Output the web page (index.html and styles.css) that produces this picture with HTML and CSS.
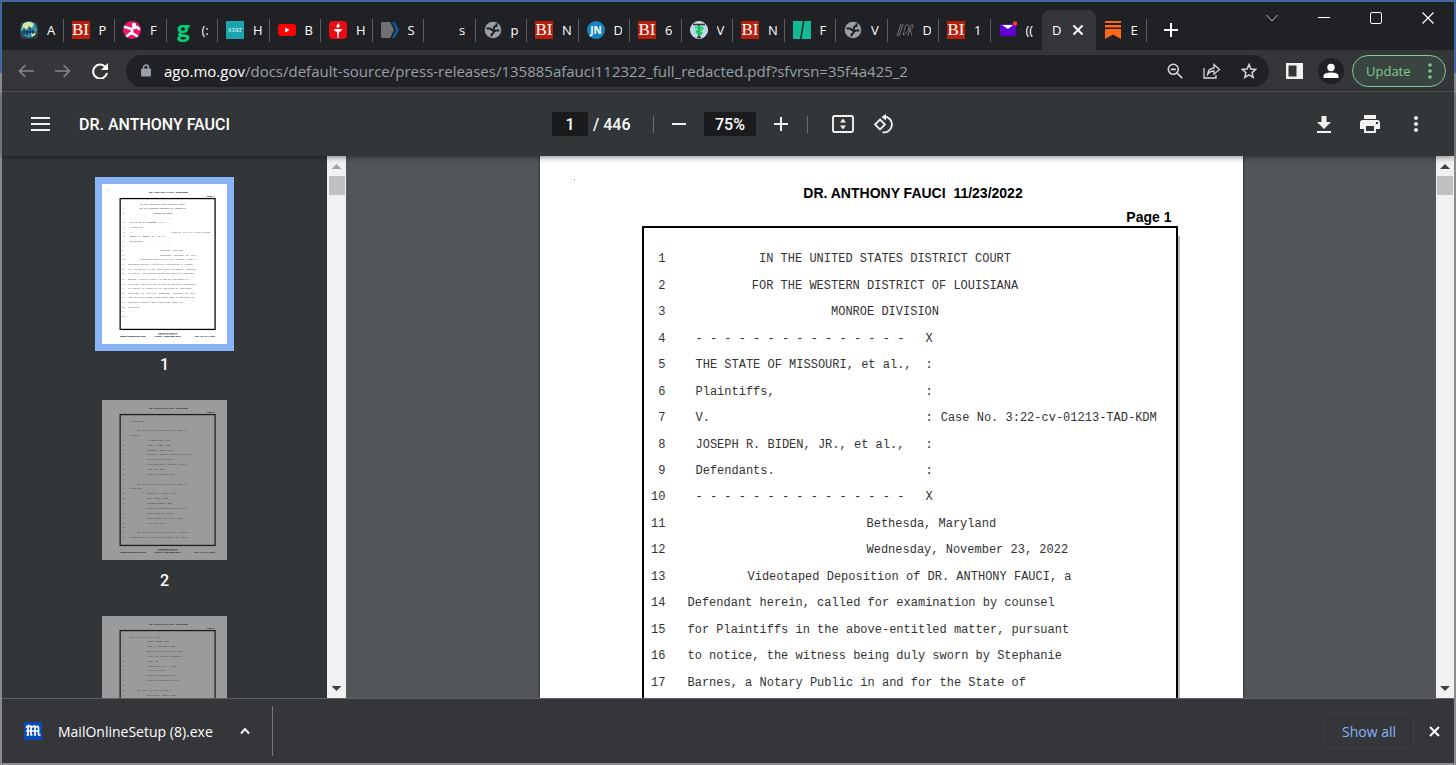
FILE: index.html
```html
<!DOCTYPE html>
<html lang="en">
<head>
    <meta charset="utf-8">
    <meta name="viewport" content="width=device-width, initial-scale=1">
    <title>DR. ANTHONY FAUCI</title>
    <link rel="stylesheet" href="styles.css">
</head>
<body>

    <!-- shared icons -->
    <svg class="sprite" aria-hidden="true">
        <symbol id="globe" viewBox="0 0 18 18">
            <circle cx="9" cy="9" r="8.3" fill="#9aa0a6"/>
            <path d="M2.500 7.500h3.500l2 1.500q2 0 2-2t2.500-2V2.500M15.500 9.500H12l-2.500 1v1.500l-2 1.500v2" fill="none" stroke="#202124" stroke-width="2"/>
        </symbol>
    </svg>

    <header class="tabstrip">
        <nav class="tabs">
            <a class="tab" href="#"><svg class="fav" viewBox="0 0 18 18"><rect y="1" width="18" height="17" rx="3" fill="#33383c"/><circle cx="9" cy="8.500" r="8.300" fill="#2d8fb5"/><path d="M3 3c4-3 9-2 11 0l-2 4-3-2-2 3-5 1zM11 12l5-3-1 5-3 2z" fill="#d8e6a4"/><path d="M4 14V7M7 14V9M10 13V7M13 13V9M2 11h14" stroke="#173c50" stroke-width="1.500"/></svg><span>A</span></a>
            <a class="tab" href="#"><b class="fav bi">BI</b><span>P</span></a>
            <a class="tab" href="#"><svg class="fav" viewBox="0 0 18 18"><circle cx="9" cy="9" r="9" fill="#f0146e"/><circle cx="11" cy="4" r="2.200" fill="#fff"/><path d="M2 6l6 2 6-2M9 8v4l5 3M9 11l-5 4M14 6l2 2" fill="none" stroke="#fff" stroke-width="2.500" stroke-linecap="round"/></svg><span>F</span></a>
            <a class="tab" href="#"><b class="fav gofund">g</b><span>(:</span></a>
            <a class="tab" href="#"><svg class="fav" viewBox="0 0 18 18"><rect width="18" height="18" fill="#1ba5ae"/><text x="9" y="11" text-anchor="middle" font-family="Liberation Serif, serif" font-size="6" fill="#fff">STAT</text></svg><span>H</span></a>
            <a class="tab" href="#"><svg class="fav" viewBox="0 0 18 18"><rect y="3" width="18" height="12" rx="3" fill="#f00"/><path d="M7.200 6.500v5l4.300-2.500z" fill="#fff"/></svg><span>B</span></a>
            <a class="tab" href="#"><svg class="fav" viewBox="0 0 18 18"><rect width="18" height="18" rx="4" fill="#ed0b12"/><path d="M9.500 2c1.500 1.500 1.500 3 .5 4.500H7.700C7 5 8 3.500 9.500 2zM5 8h8c0 1.600-1 2.500-3 2.700L9.600 17H8.400L8 10.700C6 10.500 5 9.600 5 8z" fill="#fff"/></svg><span>H</span></a>
            <a class="tab" href="#"><svg class="fav" viewBox="0 0 18 18"><path d="M1 1h8l4 8-4 8H1q-1 0-1-1V2q0-1 1-1z" fill="#6f7072"/><path d="M11 1h2.500l4.500 8-4.500 8H11l4-8z" fill="#0e5ba6"/></svg><span>S</span></a>
            <a class="tab" href="#"><i class="fav"></i><span>s</span></a>
            <a class="tab" href="#"><svg class="fav"><use href="#globe"/></svg><span>p</span></a>
            <a class="tab" href="#"><b class="fav bi">BI</b><span>N</span></a>
            <a class="tab" href="#"><svg class="fav" viewBox="0 0 18 18"><circle cx="9" cy="9" r="9" fill="#1684c4"/><text x="9" y="12.500" text-anchor="middle" font-family="Open Sans, sans-serif" font-weight="700" font-size="10" fill="#fff">JN</text></svg><span>D</span></a>
            <a class="tab" href="#"><b class="fav bi">BI</b><span>6</span></a>
            <a class="tab" href="#"><svg class="fav" viewBox="0 0 18 18"><circle cx="9" cy="9" r="8.500" fill="#b4d9f2" stroke="#e6e6e0"/><path d="M3 3.500h12M9 3v14M7 16.500h4" stroke="#333" stroke-width="1.500"/><path d="M5 6.500h7.500q1 2-3 2.500t-3 2.500h5q1 1-2.500 2.500" fill="none" stroke="#16d653" stroke-width="1.800"/></svg><span>V</span></a>
            <a class="tab" href="#"><b class="fav bi">BI</b><span>N</span></a>
            <a class="tab" href="#"><svg class="fav" viewBox="0 0 18 18"><path d="M0 0h10L7 18H0zM11.500 0H18v18H8.500z" fill="#13b995"/></svg><span>F</span></a>
            <a class="tab" href="#"><svg class="fav"><use href="#globe"/></svg><span>V</span></a>
            <a class="tab" href="#"><svg class="fav" viewBox="0 0 18 18"><path d="M1 15L5 3M3 15L7 3M7 14l3-10h2q2 1 0 5t-5 5M12 15l3-11h2q1 3-3 5l2 6" fill="#0c0c0d" stroke="#77797b"/></svg><span>D</span></a>
            <a class="tab" href="#"><b class="fav bi">BI</b><span>1</span></a>
            <a class="tab last" href="#"><svg class="fav" viewBox="0 0 18 18"><rect x="1" y="3" width="16" height="12" rx="1" fill="#5f01d1"/><path d="M3 4h11l-5 4z" fill="#fff"/><circle cx="16" cy="2.500" r="2.300" fill="#ff333a"/></svg><span>((</span></a>
            <div class="tab active"><span>D</span><button class="icon-btn tab-close" aria-label="Close tab"><svg width="12" height="12" viewBox="0 0 12 12"><path d="M1.500 1.500l9 9M10.500 1.500l-9 9" stroke="#fff" stroke-width="2"/></svg></button></div>
            <a class="tab" href="#"><svg class="fav" viewBox="0 0 18 18"><path d="M1 0h16v2H1zM1 4h16v2.500H1zM1 8h16v10l-8-4.500L1 18z" fill="#ff6719"/></svg><span>E</span></a>
        </nav>
        <div class="strip-end">
            <button class="icon-btn new-tab" aria-label="New tab"><svg width="14" height="14" viewBox="0 0 14 14"><path d="M7 0v14M0 7h14" stroke="#fff" stroke-width="2"/></svg></button>
            <div class="window-controls">
                <button class="icon-btn" aria-label="Search tabs"><svg width="12" height="12" viewBox="0 0 12 12"><path d="M.5 3L6 9l5.500-6" fill="none" stroke="#bbb"/></svg></button>
                <button class="icon-btn" aria-label="Minimize"><svg width="12" height="12" viewBox="0 0 12 12"><path d="M0 5.500h12" stroke="#fff"/></svg></button>
                <button class="icon-btn" aria-label="Maximize"><svg width="12" height="12" viewBox="0 0 12 12"><rect x=".5" y=".5" width="11" height="11" rx="1.500" fill="none" stroke="#fff"/></svg></button>
                <button class="icon-btn" aria-label="Close"><svg width="12" height="12" viewBox="0 0 12 12"><path d="M.5.5l11 11M11.500.5l-11 11" stroke="#fff" stroke-width="1.200"/></svg></button>
            </div>
        </div>
    </header>

    <div class="toolbar">
        <div class="nav-buttons">
            <button class="icon-btn" aria-label="Back"><svg width="16" height="14" viewBox="0 0 16 14"><path d="M16 7H1.500M7.500 1l-6 6 6 6" fill="none" stroke="#85878a" stroke-width="1.600"/></svg></button>
            <button class="icon-btn" aria-label="Forward"><svg width="16" height="14" viewBox="0 0 16 14"><path d="M0 7h14.500M8.500 1l6 6-6 6" fill="none" stroke="#85878a" stroke-width="1.600"/></svg></button>
            <button class="icon-btn" aria-label="Reload"><svg width="16" height="16" viewBox="0 0 16 16"><path d="M13.500 4A7 7 0 1 0 15 10" fill="none" stroke="#fff" stroke-width="2"/><path d="M16 0v7H9z" fill="#fff"/></svg></button>
        </div>
        <div class="omnibox">
            <svg width="10" height="13" viewBox="0 0 10 13"><path d="M2.500 5V3.500a2.500 2.500 0 0 1 5 0V5" fill="none" stroke="#9aa0a6" stroke-width="1.500"/><rect y="4.500" width="10" height="8" rx="1" fill="#9aa0a6"/></svg>
            <label for="url">ago.mo.gov</label>
            <input id="url" type="text" value="/docs/default-source/press-releases/135885afauci112322_full_redacted.pdf?sfvrsn=35f4a425_2">
            <button class="icon-btn" aria-label="Zoom"><svg width="16" height="16" viewBox="0 0 16 16"><circle cx="6.300" cy="6.300" r="5" fill="none" stroke="#d5d7d9" stroke-width="1.600"/><path d="M10 10l5.200 5.200M3.800 6.300h5" stroke="#d5d7d9" stroke-width="1.700"/></svg></button>
            <button class="icon-btn" aria-label="Share"><svg width="18" height="16" viewBox="0 0 18 16"><path d="M1 5v10h12v-3M4.500 11.500Q5 5.500 11 5V1.500L16.500 6.500 11 11.200V8Q7 8 4.500 11.500z" fill="none" stroke="#d5d7d9" stroke-width="1.300"/></svg></button>
            <button class="icon-btn" aria-label="Bookmark"><svg width="16" height="16" viewBox="0 0 16 16"><path d="M8 1.500l1.900 4.500 4.900.4-3.700 3.200 1.100 4.800L8 11.800l-4.200 2.600 1.100-4.800L1.200 6.400l4.900-.4z" fill="none" stroke="#d5d7d9" stroke-width="1.500"/></svg></button>
        </div>
        <button class="icon-btn side-panel" aria-label="Side panel"><svg width="17" height="16" viewBox="0 0 17 16"><path d="M0 0h17v16H0zM2.500 2.500v11h8v-11z" fill="#f1f1f1" fill-rule="evenodd"/></svg></button>
        <button class="icon-btn avatar" aria-label="Profile"><svg width="16" height="16" viewBox="0 0 16 16"><circle cx="8" cy="4.500" r="3.700" fill="#fff"/><path d="M.5 15v-2q0-3.500 7.500-3.500t7.500 3.500v2z" fill="#fff"/></svg></button>
        <button class="update">Update <svg width="4" height="16" viewBox="0 0 4 16"><circle cx="2" cy="2" r="1.800"/><circle cx="2" cy="8" r="1.800"/><circle cx="2" cy="14" r="1.800"/></svg></button>
    </div>

    <div class="pdf-toolbar">
        <div class="pdf-start">
            <button class="icon-btn" aria-label="Menu"><svg width="19" height="14" viewBox="0 0 19 14"><path d="M0 1h19M0 7h19M0 13h19" stroke="#f1f1f1" stroke-width="2"/></svg></button>
            <h1>DR. ANTHONY FAUCI</h1>
        </div>
        <div class="pdf-center">
            <input class="page-no" type="text" value="1" aria-label="Page number">
            <span class="page-total">/ 446</span>
            <i class="divider"></i>
            <button class="icon-btn" aria-label="Zoom out"><svg width="14" height="14" viewBox="0 0 14 14"><path d="M0 7h14" stroke="#f1f1f1" stroke-width="2"/></svg></button>
            <input class="zoom" type="text" value="75%" aria-label="Zoom level">
            <button class="icon-btn" aria-label="Zoom in"><svg width="14" height="14" viewBox="0 0 14 14"><path d="M0 7h14M7 0v14" stroke="#f1f1f1" stroke-width="2"/></svg></button>
            <i class="divider wide"></i>
            <button class="icon-btn" aria-label="Fit to page"><svg width="22" height="18" viewBox="0 0 22 18"><rect x="1" y="1" width="20" height="16" rx="1.500" fill="none" stroke="#f1f1f1" stroke-width="1.900"/><path d="M11 3.500L14 7.500H8zM11 14.500L8 10.500h6z" fill="#f1f1f1"/></svg></button>
            <button class="icon-btn" aria-label="Rotate"><svg width="20" height="20" viewBox="0 0 20 20"><path d="M6 5.500l5 5-5 5-5-5zM11 2.500a8 8 0 1 1-2.500 15.800" fill="none" stroke="#f1f1f1" stroke-width="1.800"/><path d="M12 0v6.500L7.500 3z" fill="#f1f1f1"/></svg></button>
        </div>
        <div class="pdf-end">
            <button class="icon-btn" aria-label="Download"><svg width="14" height="17" viewBox="0 0 14 17"><path d="M4.500 0h5v6H14l-7 7-7-7h4.500zM0 15h14v2H0z" fill="#f1f1f1"/></svg></button>
            <button class="icon-btn" aria-label="Print"><svg width="20" height="18" viewBox="0 0 20 18"><path d="M4 0h12v4H4zM3 5h14q3 0 3 3v6h-4v4H4v-4H0V8q0-3 3-3zM6 11v5h8v-5zM16 7v2h2V7z" fill="#f1f1f1" fill-rule="evenodd"/></svg></button>
            <button class="icon-btn" aria-label="More"><svg width="4" height="16" viewBox="0 0 4 16" fill="#f1f1f1"><circle cx="2" cy="2" r="2"/><circle cx="2" cy="8" r="2"/><circle cx="2" cy="14" r="2"/></svg></button>
        </div>
    </div>

    <main class="viewer">
        <aside class="sidebar">
            <figure class="thumb selected">
                <svg viewBox="0 0 703 900">
                    <rect width="703" height="900" fill="#fff"/>
                    <rect x="102" y="82" width="534" height="736" fill="none" stroke="#000" stroke-width="7"/>
                    <circle cx="34" cy="34" r="3" fill="#888"/>
                    <g class="t-bold">
                        <text x="264" y="52">DR. ANTHONY FAUCI  11/23/2022</text><text x="588" y="74">Page 1</text>
                        <text x="370" y="842" text-anchor="middle" text-decoration="underline">LEXITAS LEGAL</text>
                        <text x="102" y="861">www.lexitaslegal.com</text><text x="295" y="861">Phone: 1.800.280.3376</text><text x="520" y="861">Fax: 314.644.1334</text>
                    </g>
                    <g class="t-line">
                        <text x="118" y="116">1</text><text x="215" y="116">IN THE UNITED STATES DISTRICT COURT</text>
                        <text x="118" y="142">2</text><text x="208" y="142">FOR THE WESTERN DISTRICT OF LOUISIANA</text>
                        <text x="118" y="168">3</text><text x="289" y="168">MONROE DIVISION</text>
                        <text x="118" y="195">4</text><text x="156" y="195">- - - - - - - - - - - - - - -  X</text>
                        <text x="118" y="221">5</text><text x="156" y="221">THE STATE OF MISSOURI, et al., :</text>
                        <text x="118" y="247">6</text><text x="156" y="247">Plaintiffs,                    :</text>
                        <text x="118" y="273">7</text><text x="156" y="273">V.                             : Case No. 3:22-cv-01213-TAD-KDM</text>
                        <text x="118" y="299">8</text><text x="156" y="299">JOSEPH R. BIDEN, JR., et al.,  :</text>
                        <text x="118" y="326">9</text><text x="156" y="326">Defendants.                    :</text>
                        <text x="111" y="352">10</text><text x="156" y="352">- - - - - - - - - - - - - - -  X</text>
                        <text x="111" y="378">11</text><text x="327" y="378">Bethesda, Maryland</text>
                        <text x="111" y="404">12</text><text x="327" y="404">Wednesday, November 23, 2022</text>
                        <text x="111" y="430">13</text><text x="208" y="430">Videotaped Deposition of DR. ANTHONY FAUCI, a</text>
                        <text x="111" y="457">14</text><text x="148" y="457">Defendant herein, called for examination by counsel</text>
                        <text x="111" y="483">15</text><text x="148" y="483">for Plaintiffs in the above-entitled matter, pursuant</text>
                        <text x="111" y="509">16</text><text x="148" y="509">to notice, the witness being duly sworn by Stephanie</text>
                        <text x="111" y="540">17</text><text x="148" y="540">Barnes, a Notary Public in and for the State of</text>
                        <text x="111" y="566">18</text><text x="148" y="566">Maryland, taken at the offices of National Institutes</text>
                        <text x="111" y="592">19</text><text x="148" y="592">of Health, 31 Center Drive, Building 31, Bethesda,</text>
                        <text x="111" y="618">20</text><text x="148" y="618">Maryland, at 9:08 a.m., Wednesday, November 23, 2022,</text>
                        <text x="111" y="644">21</text><text x="148" y="644">and the proceedings being taken down by Stenotype by</text>
                        <text x="111" y="669">22</text><text x="148" y="669">Stephanie Barnes, and transcribed under her</text>
                        <text x="111" y="695">23</text><text x="148" y="695">direction.</text>
                        <text x="111" y="721">24</text>
                        <text x="111" y="747">25</text>
                    </g>
                </svg>
                <figcaption>1</figcaption>
            </figure>
            <figure class="thumb">
                <svg viewBox="0 0 703 900">
                    <rect width="703" height="900" fill="#fff"/>
                    <rect x="102" y="82" width="534" height="736" fill="none" stroke="#000" stroke-width="7"/>
                    <g class="t-bold">
                        <text x="264" y="52">DR. ANTHONY FAUCI  11/23/2022</text><text x="588" y="74">Page 2</text>
                        <text x="370" y="842" text-anchor="middle" text-decoration="underline">LEXITAS LEGAL</text>
                        <text x="102" y="861">www.lexitaslegal.com</text><text x="295" y="861">Phone: 1.800.280.3376</text><text x="520" y="861">Fax: 314.644.1334</text>
                    </g>
                    <g class="t-line">
                        <text x="118" y="121">1</text><text x="156" y="121">APPEARANCES:</text>
                        <text x="118" y="148">2</text>
                        <text x="118" y="175">3</text><text x="201" y="175">On behalf of the Plaintiff the State of</text>
                        <text x="118" y="203">4</text><text x="156" y="203">Missouri:</text>
                        <text x="118" y="230">5</text><text x="253" y="230">D. JOHN SAUER, Esq.</text>
                        <text x="118" y="257">6</text><text x="253" y="257">TODD A. SCOTT, Esq.</text>
                        <text x="118" y="285">7</text><text x="253" y="285">JUSTIN D. SMITH, Esq.</text>
                        <text x="118" y="312">8</text><text x="253" y="312">Missouri Attorney General's Office</text>
                        <text x="118" y="339">9</text><text x="253" y="339">207 West High Street</text>
                        <text x="111" y="367">10</text><text x="253" y="367">Jefferson City, Missouri  65101</text>
                        <text x="111" y="394">11</text><text x="253" y="394">(573) 751-8870</text>
                        <text x="111" y="421">12</text><text x="253" y="421">john.sauer@ago.mo.gov</text>
                        <text x="111" y="449">13</text>
                        <text x="111" y="476">14</text><text x="201" y="476">On behalf of the Plaintiff the State of</text>
                        <text x="111" y="503">15</text><text x="156" y="503">Louisiana:</text>
                        <text x="111" y="531">16</text><text x="253" y="531">JEFFREY M. LANDRY, Esq.</text>
                        <text x="111" y="558">17</text><text x="253" y="558">TRACY SHORT, Esq.</text>
                        <text x="111" y="585">18</text><text x="253" y="585">BRANDON STEELE, Esq.</text>
                        <text x="111" y="613">19</text><text x="253" y="613">Louisiana Department of Justice</text>
                        <text x="111" y="640">20</text><text x="253" y="640">1885 North 3rd Street</text>
                        <text x="111" y="667">21</text><text x="253" y="667">Baton Rouge, Louisiana  70802</text>
                        <text x="111" y="695">22</text><text x="253" y="695">(225) 326-6705</text>
                        <text x="111" y="722">23</text>
                        <text x="111" y="749">24</text><text x="201" y="749">On behalf of the Plaintiffs Dr. Jayanta</text>
                        <text x="111" y="777">25</text><text x="156" y="777">Bhattacharya, Dr. Martin Kulldorff, Dr. Aaron</text>
                    </g>
                </svg>
                <figcaption>2</figcaption>
            </figure>
            <figure class="thumb">
                <svg viewBox="0 0 703 900">
                    <rect width="703" height="900" fill="#fff"/>
                    <rect x="102" y="82" width="534" height="736" fill="none" stroke="#000" stroke-width="7"/>
                    <g class="t-bold">
                        <text x="264" y="52">DR. ANTHONY FAUCI  11/23/2022</text><text x="588" y="74">Page 3</text>
                    </g>
                    <g class="t-line">
                        <text x="118" y="121">1</text><text x="156" y="121">Kheriaty, and Jill Hines:</text>
                        <text x="118" y="148">2</text><text x="253" y="148">JENIN YOUNES, Esq.</text>
                        <text x="118" y="175">3</text><text x="253" y="175">JOHN J. VECCHIONE, Esq.</text>
                        <text x="118" y="203">4</text><text x="253" y="203">New Civil Liberties Alliance</text>
                        <text x="118" y="230">5</text><text x="253" y="230">1225 19th Street, Northwest</text>
                        <text x="118" y="257">6</text><text x="253" y="257">Suite 450</text>
                        <text x="118" y="285">7</text><text x="253" y="285">Washington, D.C.  20036</text>
                        <text x="118" y="312">8</text><text x="253" y="312">(202) 918-6905</text>
                        <text x="118" y="339">9</text><text x="253" y="339">jenin.younes@ncla.legal</text>
                        <text x="111" y="367">10</text><text x="253" y="367">john.vecchione@ncla.legal</text>
                        <text x="111" y="394">11</text>
                        <text x="111" y="421">12</text><text x="201" y="421">On behalf of the Plaintiff:</text>
                        <text x="111" y="449">13</text><text x="253" y="449">JONATHON C. BURNS, Esq.</text>
                    </g>
                </svg>
            </figure>
        </aside>
        <div class="scrollbar inactive"><b class="arrow up"></b><b class="grip"></b><b class="arrow down"></b></div>

        <section class="canvas">
            <article class="page">
                <span class="speck"></span>
                <p class="page-head">DR. ANTHONY FAUCI&nbsp; 11/23/2022</p>
                <p class="page-label">Page 1</p>
                <div class="transcript">
                    <ol>
                        <li><span>1</span><p class="center">IN THE UNITED STATES DISTRICT COURT</p></li>
                        <li><span>2</span><p class="center">FOR THE WESTERN DISTRICT OF LOUISIANA</p></li>
                        <li><span>3</span><p class="center">MONROE DIVISION</p></li>
                        <li><span>4</span><p class="party">- - - - - - - - - - - - - - -</p><p>X</p></li>
                        <li><span>5</span><p class="party">THE STATE OF MISSOURI, et al.,</p><p>:</p></li>
                        <li><span>6</span><p class="party">Plaintiffs,</p><p>:</p></li>
                        <li><span>7</span><p class="party">V.</p><p>:</p><p class="case">Case No. 3:22-cv-01213-TAD-KDM</p></li>
                        <li><span>8</span><p class="party">JOSEPH R. BIDEN, JR., et al.,</p><p>:</p></li>
                        <li><span>9</span><p class="party">Defendants.</p><p>:</p></li>
                        <li><span>10</span><p class="party">- - - - - - - - - - - - - - -</p><p>X</p></li>
                        <li><span>11</span><p class="place">Bethesda, Maryland</p></li>
                        <li><span>12</span><p class="place">Wednesday, November 23, 2022</p></li>
                        <li><span>13</span><p class="indent">Videotaped Deposition of DR. ANTHONY FAUCI, a</p></li>
                        <li><span>14</span><p>Defendant herein, called for examination by counsel</p></li>
                        <li><span>15</span><p>for Plaintiffs in the above-entitled matter, pursuant</p></li>
                        <li><span>16</span><p>to notice, the witness being duly sworn by Stephanie</p></li>
                        <li><span>17</span><p>Barnes, a Notary Public in and for the State of</p></li>
                    </ol>
                </div>
            </article>
        </section>
        <div class="scrollbar"><b class="arrow up"></b><b class="grip"></b><b class="arrow down"></b></div>
    </main>

    <footer class="downloads">
        <div class="download-item">
            <svg width="18" height="18" viewBox="0 0 18 18"><rect width="18" height="18" fill="#0a4bb8"/><path d="M2 5.500l2-1.500v9M7 5v8M11 5v8M14.500 5v8M4 5l2.500-1L8 5l2.500-1L12 5l2.500-1M2 9h13M2.500 13h2.500M6.500 13h2M10 13h2M14 13h2.500" fill="none" stroke="#fff" stroke-width="1.700"/></svg>
            <a href="#">MailOnlineSetup (8).exe</a>
            <button class="icon-btn" aria-label="Download options"><svg width="10" height="8" viewBox="0 0 10 8"><path d="M1 6.500l4-4.500 4 4.500" fill="none" stroke="#f1f1f1" stroke-width="1.900"/></svg></button>
        </div>
        <div class="download-actions">
            <button class="show-all">Show all</button>
            <button class="icon-btn" aria-label="Close downloads bar"><svg width="11" height="11" viewBox="0 0 11 11"><path d="M1 1l9 9M10 1l-9 9" stroke="#fff" stroke-width="2"/></svg></button>
        </div>
    </footer>

</body>
</html>
```

FILE: styles.css
```css
* {
    box-sizing: border-box;
}

body {
    margin: 0;
    padding: 2px;
    height: 100vh;
    display: flex;
    flex-direction: column;
    overflow: hidden;
    background: linear-gradient(#45689c 73px, #8b8c8e 73px);
    font-family: "Open Sans", "Noto Sans", sans-serif;
    color: #fff;
}

p, h1, ol, figure {
    margin: 0;
    padding: 0;
}

a {
    color: inherit;
    text-decoration: none;
}

button, input {
    font: inherit;
    color: inherit;
    border: 0;
    padding: 0;
    background: none;
}

svg {
    display: block;
    flex: none;
}

.sprite {
    position: absolute;
    width: 0;
    height: 0;
}

.icon-btn {
    flex: none;
    width: 32px;
    height: 32px;
    display: flex;
    align-items: center;
    justify-content: center;
}

/* tabs */
.tabstrip {
    flex: none;
    height: 48px;
    display: flex;
    background: #202124;
    padding-left: 10px;
}

.tabs {
    flex: 1;
    min-width: 0;
    display: flex;
    align-items: flex-end;
}

.tab {
    position: relative;
    flex: 1 1 0;
    min-width: 0;
    height: 40px;
    display: flex;
    align-items: center;
    gap: 9px;
    padding: 0 8px;
    font-size: 13px;
}

.tab span {
    flex: 1;
    min-width: 0;
    overflow: hidden;
}

.tab::after {
    content: "";
    position: absolute;
    right: 0;
    top: 9px;
    width: 1px;
    height: 23px;
    background: #5c5d60;
}

.tab.active::after, .tab.last::after {
    display: none;
}

.tab.active {
    background: #35363a;
    border-radius: 8px 8px 0 0;
    gap: 5px;
    padding: 0 8px 0 10px;
}

.tab-close {
    width: 20px;
    height: 20px;
}

.fav {
    flex: none;
    width: 18px;
    height: 18px;
    text-align: center;
}

.bi {
    background: #b9200b;
    font: 17px/18px "Liberation Serif", serif;
}

.gofund {
    color: #05ce78;
    font: 900 25px/14px Lato, sans-serif;
}

.strip-end {
    width: 307px;
    display: flex;
    justify-content: space-between;
}

.new-tab {
    margin: 12px 0 0 8px;
}

.window-controls {
    display: flex;
}

.window-controls .icon-btn {
    width: 52px;
}

/* address bar */
.toolbar {
    flex: none;
    height: 42px;
    display: flex;
    align-items: center;
    background: #35363a;
    border-bottom: 1px solid #5a5b5e;
    padding: 0 8px;
}

.nav-buttons {
    display: flex;
    gap: 5px;
    margin-right: 10px;
}

.omnibox {
    flex: 1;
    height: 32px;
    display: flex;
    align-items: center;
    gap: 5px;
    padding: 0 4px 0 15px;
    border-radius: 16px;
    background: #202124;
    font-size: 15px;
}

.omnibox label {
    margin-left: 8px;
}

.omnibox input {
    flex: 1;
    min-width: 0;
    margin-left: -5px;
    color: #9aa0a6;
}

.side-panel {
    margin-left: 9px;
}

.avatar {
    width: 26px;
    height: 26px;
    margin: 0 8px;
    border-radius: 50%;
    background: #202124;
}

.update {
    width: 94px;
    height: 32px;
    display: flex;
    align-items: center;
    justify-content: space-between;
    padding: 0 13px;
    border: 1px solid #81c995;
    border-radius: 16px;
    background: #3a4441;
    color: #81c995;
    fill: #81c995;
    font-size: 13px;
}

/* pdf toolbar */
.pdf-toolbar {
    position: relative;
    z-index: 1;
    flex: none;
    height: 64px;
    display: flex;
    align-items: center;
    background: #323639;
    box-shadow: 0 1px 6px rgba(0, 0, 0, .5);
    font-family: Roboto, sans-serif;
    font-size: 16px;
    font-weight: 500;
}

.pdf-start, .pdf-end {
    flex: 1;
    display: flex;
    align-items: center;
}

.pdf-start {
    gap: 23px;
    padding-left: 22px;
}

.pdf-start h1 {
    font-size: 16px;
    font-weight: 500;
}

.pdf-center {
    display: flex;
    align-items: center;
    gap: 9px;
    padding-right: 4px;
}

.pdf-center input {
    height: 24px;
    background: #191b1c;
    text-align: center;
}

.page-no {
    width: 36px;
}

.zoom {
    width: 52px;
}

.page-total {
    width: 47px;
    margin-left: -4px;
}

.divider {
    width: 1px;
    height: 17px;
    margin-left: 4px;
    background: #6b6e70;
}

.divider.wide {
    margin: 0 10px 0 1px;
}

.pdf-end {
    justify-content: flex-end;
    gap: 14px;
    padding-right: 22px;
}

/* viewer */
.viewer {
    flex: 1;
    min-height: 0;
    display: flex;
    background: #525659;
}

.sidebar {
    width: 325px;
    overflow: hidden;
    display: flex;
    flex-direction: column;
    align-items: center;
    gap: 27px;
    padding-top: 28px;
    background: #323639;
}

.thumb {
    flex: none;
}

.thumb svg {
    width: 125px;
    height: 160px;
    opacity: .5;
}

.thumb.selected svg {
    opacity: 1;
    box-shadow: 0 0 0 7px #8ab4f8;
}

.thumb figcaption {
    margin-top: 13px;
    font: 500 16px/16px Roboto, sans-serif;
    text-align: center;
}

.t-bold text {
    font: bold 14px "Liberation Sans", sans-serif;
    white-space: pre;
}

.t-line text {
    font: 12px "Liberation Mono", monospace;
    fill: #444;
    white-space: pre;
}

.scrollbar {
    flex: none;
    width: 18px;
    display: flex;
    flex-direction: column;
    align-items: center;
    background: #f1f1f1;
}

.inactive {
    width: 19px;
}

.grip {
    width: 16px;
    height: 19px;
    background: #c1c1c1;
}

.arrow {
    width: 10px;
    height: 5px;
    margin: 8px 0 7px;
    background: #404040;
}

.up {
    clip-path: polygon(50% 0, 100% 100%, 0 100%);
}

.down {
    margin-top: auto;
    clip-path: polygon(0 0, 100% 0, 50% 100%);
}

.inactive .up {
    background: #a3a3a3;
}

.canvas {
    flex: 1;
    min-width: 0;
    overflow: hidden;
    display: flex;
    justify-content: center;
}

.page {
    position: relative;
    flex: none;
    width: 703px;
    background: #fff;
    color: #000;
    box-shadow: 0 0 3px #222;
    padding: 28px 65px 0 102px;
    font: bold 14px/18px "Liberation Sans", sans-serif;
}

.speck {
    position: absolute;
    left: 34px;
    top: 23px;
    width: 1px;
    height: 1px;
    background: #888;
}

.page-head {
    text-align: center;
    padding-left: 7px;
}

.page-label {
    margin-top: 6px;
    padding-right: 6px;
    text-align: right;
}

.transcript {
    height: 740px;
    border: 2px solid #000;
    box-shadow: 2px 10px 0 #bbb;
    padding-top: 18px;
    font: 12px/16px "Liberation Mono", monospace;
    color: #333;
}

/* 17 numbered rows share this height evenly */
.transcript ol {
    height: 450px;
    display: grid;
    grid-auto-rows: 1fr;
    list-style: none;
}

.transcript li {
    display: flex;
    align-items: center;
    white-space: pre;
}

.transcript li span {
    width: 22px;
    margin-right: 22px;
    text-align: right;
}

.transcript .center {
    width: 395px;
    text-align: center;
}

.transcript .party {
    width: 238px;
    padding-left: 8px;
}

.transcript .case {
    margin-left: 8px;
}

.transcript .place {
    padding-left: 179px;
}

.transcript .indent {
    padding-left: 60px;
}

/* downloads bar */
.downloads {
    flex: none;
    height: 65px;
    display: flex;
    align-items: center;
    justify-content: space-between;
    background: #35363a;
    border-top: 1px solid #5f6164;
    font-size: 14px;
}

.download-item {
    height: 50px;
    display: flex;
    align-items: center;
    padding: 0 11px 0 22px;
    border-right: 1px solid #77797c;
}

.download-item a {
    margin: 0 16px;
}

.download-actions {
    display: flex;
    align-items: center;
    gap: 4px;
    padding-right: 4px;
}

.show-all {
    width: 90px;
    height: 36px;
    border: 1px solid #3f4044;
    border-radius: 4px;
    color: #8ab4f8;
}
```
